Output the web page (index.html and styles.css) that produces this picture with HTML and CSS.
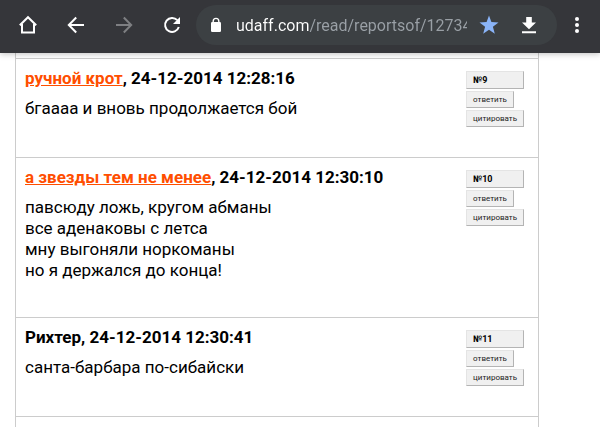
FILE: index.html
```html
<!DOCTYPE html>
<html lang="ru">
<head>
  <meta charset="UTF-8" />
  <meta name="viewport" content="width=device-width, initial-scale=1.0" />
  <title>udaff.com</title>
  <link rel="stylesheet" href="styles.css">
</head>
<body>
  <header class="toolbar">
    <button class="tool" aria-label="Домой">
      <svg width="20" height="20" viewBox="0 0 20 20"><path d="M1.8 10.2 10 2.2l8.2 8M4 9v8.5h12V9" fill="none" stroke="#fff" stroke-width="2"/></svg>
    </button>
    <button class="tool" aria-label="Назад">
      <svg width="18" height="18" viewBox="0 0 18 18"><path d="M17 9H2M9.2 1.5 1.8 9l7.4 7.5" fill="none" stroke="#fff" stroke-width="2"/></svg>
    </button>
    <button class="tool" aria-label="Вперед" disabled>
      <svg width="18" height="18" viewBox="0 0 18 18"><path d="M1 9h15M8.8 1.5 16.2 9l-7.4 7.5" fill="none" stroke="#7e7f82" stroke-width="2"/></svg>
    </button>
    <button class="tool" aria-label="Обновить">
      <svg width="18" height="18" viewBox="0 0 18 18"><path d="M14.3 4.2A7 7 0 1 0 15.8 11" fill="none" stroke="#fff" stroke-width="2"/><path d="M17 1v7h-7z" fill="#fff"/></svg>
    </button>
    <div class="address">
      <svg class="lock" width="40" height="16" viewBox="0 0 40 16"><path d="M17.2 7V4.2a2.8 2.8 0 0 1 5.6 0V7" fill="none" stroke="#fff" stroke-width="1.4"/><rect x="15" y="5" width="10" height="10" rx="1.2" fill="#fff"/></svg>
      <input class="url" type="text" aria-label="Адрес" value="udaff.com/read/reportsof/127347.html">
      <button class="tool small" aria-label="Закладка">
        <svg width="20" height="20" viewBox="0 0 20 20"><path d="m10 .5 2.4 6.6 7.1.3-5.6 4.4 1.9 6.9-5.8-4-5.8 4 1.9-6.9L.5 7.4l7.1-.3z" fill="#8ab4f8"/></svg>
      </button>
      <button class="tool small" aria-label="Скачать">
        <svg width="14" height="18" viewBox="0 0 14 18"><path d="M4.2 1h5.6v5.5H14l-7 6.8-7-6.8h4.2zM0 15.2h14v2H0z" fill="#fff"/></svg>
      </button>
    </div>
    <button class="tool small menu" aria-label="Меню">
      <svg width="6" height="18" viewBox="0 0 6 18"><g fill="#fff"><circle cx="3" cy="3" r="2"/><circle cx="3" cy="9" r="2"/><circle cx="3" cy="15" r="2"/></g></svg>
    </button>
  </header>

  <main class="comments">
    <article class="comment">
      <div class="text">
        <h3><a href="#">ручной крот</a>, 24-12-2014 12:28:16</h3>
        <p>бгаааа и вновь продолжается бой</p>
      </div>
      <div class="actions">
        <button class="number">№9</button>
        <button>ответить</button>
        <button>цитировать</button>
      </div>
    </article>

    <article class="comment">
      <div class="text">
        <h3><a href="#">а звезды тем не менее</a>, 24-12-2014 12:30:10</h3>
        <p>павсюду ложь, кругом абманы<br>
        все аденаковы с летса<br>
        мну выгоняли норкоманы<br>
        но я держался до конца!</p>
      </div>
      <div class="actions">
        <button class="number">№10</button>
        <button>ответить</button>
        <button>цитировать</button>
      </div>
    </article>

    <article class="comment">
      <div class="text">
        <h3>Рихтер, 24-12-2014 12:30:41</h3>
        <p>санта-барбара по-сибайски</p>
      </div>
      <div class="actions">
        <button class="number">№11</button>
        <button>ответить</button>
        <button>цитировать</button>
      </div>
    </article>
  </main>
</body>
</html>
```

FILE: styles.css
```css
* {
  box-sizing: border-box;
}

body {
  display: flex;
  flex-direction: column;
  min-height: 100vh;
  margin: 0;
  background-color: white;
  color: black;
  font-family: Roboto, "Liberation Sans", sans-serif;
}

.toolbar {
  display: flex;
  align-items: center;
  height: 53px;
  padding: 0 3px 3px 4px;
  background-color: #35363a;
  box-shadow: 0 1px 6px rgba(0, 0, 0, 0.25);
  position: relative;
}

.tool {
  display: flex;
  flex: none;
  justify-content: center;
  align-items: center;
  width: 48px;
  height: 40px;
  padding: 0;
  border: none;
  background: none;
  cursor: pointer;
}

.tool.small {
  width: 40px;
}

.address {
  display: flex;
  flex: 1;
  align-items: center;
  min-width: 0;
  height: 40px;
  padding-right: 8px;
  border-radius: 20px;
  background-color: #3c4043;
}

.lock {
  flex: none;
}

/* the domain is white, the rest of the address is grey */
.url {
  flex: 1;
  min-width: 0;
  height: 24px;
  margin-right: 2px;
  padding: 0;
  border: none;
  outline: none;
  font-family: inherit;
  font-size: 16px;
  color: transparent;
  background-image: linear-gradient(to right, white 73px, #9aa0a6 73px);
  background-clip: text;
  -webkit-background-clip: text;
}

.comments {
  flex: 1;
  margin: 0 61px 0 15px;
  padding-top: 5px;
  border: 1px solid #ccc;
  border-width: 0 1px;
}

.comment {
  display: flex;
  justify-content: space-between;
  padding: 9px 14px 30px 9px;
  border-top: 1px solid #ccc;
}

.comment:last-child {
  border-bottom: 1px solid #ccc;
}

h3 {
  margin: 0 0 9px;
  font-size: 17px;
  line-height: 21px;
}

h3 a {
  color: #ff4e00;
}

p {
  margin: 0 0 6px;
  font-size: 17px;
  line-height: 21px;
}

.actions {
  display: flex;
  flex-direction: column;
  align-items: flex-start;
  gap: 2px;
  padding-top: 3px;
}

.actions button {
  height: 17px;
  padding: 0 6px;
  border: 1px solid #e4e4e4;
  border-right-color: #b4b4b4;
  border-bottom-color: #b4b4b4;
  background-color: #f0f0f0;
  color: #222;
  font-family: inherit;
  font-size: 8px;
  line-height: 15px;
  text-align: left;
  cursor: pointer;
}

.actions .number {
  width: 100%;
  height: 18px;
  color: black;
  font-size: 9px;
  font-weight: bold;
}
```
